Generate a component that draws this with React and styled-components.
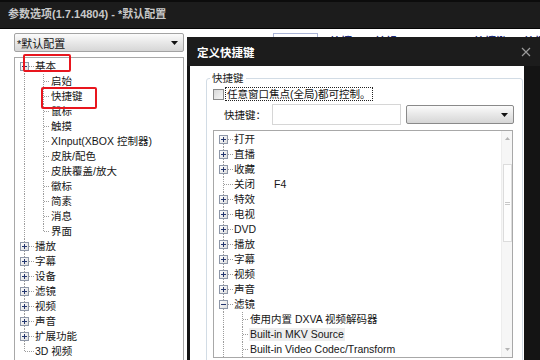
import React from "react";
import styled, { createGlobalStyle } from "styled-components";

const FONT = `"Liberation Sans", "Noto Sans CJK SC", sans-serif`;

const GlobalStyle = createGlobalStyle`
  html, body { margin: 0; padding: 0; background: #fff; }
  body { font-family: ${FONT}; }
  * { box-sizing: border-box; }
`;

const Window = styled.div`
  position: relative;
  width: 540px;
  height: 360px;
  overflow: hidden;
  background: #fff;
  font-family: ${FONT};
  display: flex;
  flex-direction: column;
`;

const TitleBar = styled.div`
  flex: none;
  height: 29px;
  background: #1c1c1c;
  border-top: 2px solid #0c0c0c;
  border-bottom: 1px solid #050505;
  padding-left: 8px;
  color: #c8c8c8;
  font-size: 11px;
  font-weight: bold;
  line-height: 25px;
`;

const Content = styled.div`
  flex: 1;
  display: flex;
  align-items: flex-start;
  padding: 4px 0 0 14px;
`;

const LeftPanel = styled.div`
  width: 170px;
  flex: none;
  display: flex;
  flex-direction: column;
  gap: 5px;
`;

const Combo = styled.div`
  display: flex;
  align-items: center;
  width: ${(p) => p.$w}px;
  height: 19px;
  padding: 0 5px 0 2px;
  border: 1px solid ${(p) => p.$border || "#a3a3a3"};
  border-radius: 2px;
  background: linear-gradient(#fbfbfb, #e8e8e8 50%, #d6d6d6);
  font-size: 11px;
  color: #111;
`;

const ComboText = styled.span`
  flex: 1;
`;

const TreeBox = styled.div`
  display: flex;
  width: ${(p) => p.$w}px;
  height: ${(p) => p.$h}px;
  border: 1px solid #a8a8a8;
  background: #fff;
  overflow: hidden;
`;

const TreeRows = styled.div`
  flex: 1;
  display: flex;
  flex-direction: column;
  padding-top: 1px;
  min-width: 0;
`;

const Row = styled.div`
  display: flex;
  align-items: center;
  flex: none;
  height: 15px;
  white-space: nowrap;
  font-size: 10.5px;
  color: #161616;
`;

const Label = styled.span`
  line-height: 13px;
  padding: 0 1px;
  margin-left: -1px;
  background: ${(p) => (p.$selected ? "#eeeeee" : "transparent")};
`;

const KeyText = styled.span`
  margin-left: 18px;
  line-height: 13px;
`;

const UnderPanel = styled.div`
  display: flex;
  align-items: flex-start;
  padding-left: 89px;
`;

const UnderBox = styled.div`
  width: 45px;
  height: 20px;
  border: 1px solid #aab4d6;
  background: #fff;
`;

const UnderTag = styled.span`
  margin-left: ${(p) => p.$ml}px;
  margin-top: 2px;
  font-size: 11px;
  font-weight: bold;
  color: #1d2b7a;
  line-height: 14px;
  white-space: nowrap;
`;

const Dialog = styled.div`
  position: absolute;
  left: 187px;
  top: 37px;
  right: 0;
  bottom: 0;
  background: #141414;
  display: flex;
  flex-direction: column;
`;

const DialogTitle = styled.div`
  flex: none;
  height: 29px;
  display: flex;
  align-items: center;
  padding: 0 9px 0 10px;
  background: #1c1c1c;
  color: #fff;
  font-size: 11.5px;
  font-weight: bold;
`;

const CloseBtn = styled.span`
  margin-left: auto;
  display: flex;
`;

const DialogBody = styled.div`
  flex: 1;
  margin: 0 16px 0 3px;
  background: #fff;
  padding: 5px 1px 0 16px;
  overflow: hidden;
`;

const Group = styled.fieldset`
  margin: 0;
  padding: 0 8px 0 6px;
  min-width: 0;
  height: 320px;
  border: 1px solid #d2dce5;
  border-radius: 3px;
`;

const Legend = styled.legend`
  margin-left: -3px;
  padding: 0 2px;
  font-size: 10.5px;
  line-height: 14px;
  color: #1a1a1a;
`;

const CheckRow = styled.div`
  display: flex;
  align-items: center;
  height: 14px;
  margin-top: 2px;
`;

const CheckBox = styled.span`
  width: 11px;
  height: 11px;
  border: 1px solid #8a8a8a;
  background: linear-gradient(135deg, #d8d8d8, #f6f6f6);
`;

const FocusLabel = styled.span`
  margin-left: 1px;
  padding: 0 1px;
  border: 1px dotted #222;
  font-size: 10.5px;
  line-height: 12px;
  color: #111;
`;

const KeyRow = styled.div`
  display: flex;
  align-items: center;
  margin-top: 3px;
`;

const KeyLabel = styled.span`
  width: 59px;
  padding-left: 11px;
  font-size: 10.5px;
  color: #111;
`;

const Input = styled.div`
  width: 129px;
  height: 21px;
  border: 1px solid #d6d6d6;
  background: #fff;
`;

const ComboSpacer = styled.div`
  margin-left: 5px;
`;

const TreeWrap = styled.div`
  margin-top: 5px;
`;

const Scrollbar = styled.div`
  flex: none;
  width: 11px;
  display: flex;
  flex-direction: column;
  align-items: center;
  background: #f6f6f6;
  border-left: 1px solid #ededed;
`;

const ScrollArrow = styled.div`
  flex: none;
  height: 15px;
  display: flex;
  align-items: center;
  justify-content: center;
`;

const Thumb = styled.div`
  flex: none;
  margin-top: 18px;
  width: 9px;
  height: 78px;
  border: 1px solid #dcdcdc;
  background: #fdfdfd;
  display: flex;
  align-items: center;
  justify-content: center;
`;

const Grip = styled.span`
  width: 5px;
  height: 3px;
  border-top: 1px solid #c8c8c8;
  border-bottom: 1px solid #c8c8c8;
`;

const Fill = styled.div`
  flex: 1;
`;

const Marker = styled.div`
  position: absolute;
  left: ${(p) => p.$x}px;
  top: ${(p) => p.$y}px;
  width: ${(p) => p.$w}px;
  height: ${(p) => p.$h}px;
  border: 2px solid #e8161e;
  border-radius: 2px;
`;

function DownArrow({ color = "#111" }) {
  return (
    <svg width="7" height="4" viewBox="0 0 7 4">
      <path d="M0 0H7L3.5 4Z" fill={color} />
    </svg>
  );
}

function SmallArrow({ up }) {
  return (
    <svg width="5" height="3" viewBox="0 0 5 3">
      <path d={up ? "M0 3H5L2.5 0Z" : "M0 0H5L2.5 3Z"} fill="#b4b4b4" />
    </svg>
  );
}

function CloseIcon() {
  return (
    <svg width="10" height="10" viewBox="0 0 10 10">
      <path d="M1 1L9 9M9 1L1 9" stroke="#9a9a9a" strokeWidth="1.2" />
    </svg>
  );
}

const DOT = "#9c9c9c";

function Glyph({ depth, expander, expanded, first, last, parentLast }) {
  const w = depth === 0 ? 20 : 36;
  const common = {
    stroke: DOT,
    strokeWidth: 1,
    strokeDasharray: "1 1",
    shapeRendering: "crispEdges",
  };
  return (
    <svg width={w} height="15" viewBox={`0 0 ${w} 15`} style={{ flex: "none" }}>
      <defs>
        <linearGradient id="exp" x1="0" y1="0" x2="1" y2="1">
          <stop offset="0" stopColor="#ffffff" />
          <stop offset="1" stopColor="#dcdcdc" />
        </linearGradient>
      </defs>
      {depth === 0 ? (
        <>
          <line x1="9.5" y1={first ? 7.5 : 0} x2="9.5" y2={last ? 7.5 : 15} {...common} />
          <line x1="10" y1="7.5" x2="19" y2="7.5" {...common} />
        </>
      ) : (
        <>
          {!parentLast && <line x1="9.5" y1="0" x2="9.5" y2="15" {...common} />}
          <line x1="28.5" y1="0" x2="28.5" y2={last ? 7.5 : 15} {...common} />
          <line x1="29" y1="7.5" x2="35" y2="7.5" {...common} />
        </>
      )}
      {expander && (
        <>
          <rect x="5.5" y="3.5" width="8" height="8" fill="url(#exp)" stroke="#8e97a8" shapeRendering="crispEdges" />
          <line x1="7" y1="7.5" x2="12" y2="7.5" stroke="#24366e" shapeRendering="crispEdges" />
          {!expanded && <line x1="9.5" y1="5" x2="9.5" y2="10" stroke="#24366e" shapeRendering="crispEdges" />}
        </>
      )}
    </svg>
  );
}

function flatten(nodes) {
  const rows = [];
  nodes.forEach((n, i) => {
    const kids = n.children || [];
    rows.push({
      depth: 0,
      label: n.label,
      keyText: n.key,
      expander: !!(n.children || n.collapsed),
      expanded: !!n.children,
      first: i === 0,
      last: i === nodes.length - 1,
    });
    kids.forEach((c, j) => {
      const child = typeof c === "string" ? { label: c } : c;
      rows.push({
        depth: 1,
        label: child.label,
        selected: child.selected,
        last: j === kids.length - 1,
        parentLast: i === nodes.length - 1,
      });
    });
  });
  return rows;
}

function Tree({ nodes }) {
  return flatten(nodes).map((r, i) => (
    <Row key={i}>
      <Glyph {...r} />
      <Label $selected={r.selected}>{r.label}</Label>
      {r.keyText && <KeyText>{r.keyText}</KeyText>}
    </Row>
  ));
}

const leftNodes = [
  {
    label: "基本",
    children: [
      "启始",
      "快捷键",
      "鼠标",
      "触摸",
      "XInput(XBOX 控制器)",
      "皮肤/配色",
      "皮肤覆盖/放大",
      "徽标",
      "简素",
      "消息",
      "界面",
    ],
  },
  { label: "播放", collapsed: true },
  { label: "字幕", collapsed: true },
  { label: "设备", collapsed: true },
  { label: "滤镜", collapsed: true },
  { label: "视频", collapsed: true },
  { label: "声音", collapsed: true },
  { label: "扩展功能", collapsed: true },
  { label: "3D 视频" },
];

const rightNodes = [
  { label: "打开", collapsed: true },
  { label: "直播", collapsed: true },
  { label: "收藏", collapsed: true },
  { label: "关闭", key: "F4" },
  { label: "特效", collapsed: true },
  { label: "电视", collapsed: true },
  { label: "DVD", collapsed: true },
  { label: "播放", collapsed: true },
  { label: "字幕", collapsed: true },
  { label: "视频", collapsed: true },
  { label: "声音", collapsed: true },
  {
    label: "滤镜",
    children: [
      "使用内置 DXVA 视频解码器",
      { label: "Built-in MKV Source", selected: true },
      "Built-in Video Codec/Transform",
      "Built-in Audio Codec/Transform",
      "Built-in Subtitle Renderer",
    ],
  },
  { label: "其他", collapsed: true },
];

export default function App() {
  return (
    <>
      <GlobalStyle />
      <Window>
        <TitleBar>参数选项(1.7.14804) - *默认配置</TitleBar>
        <Content>
          <LeftPanel>
            <Combo $w={170}>
              <ComboText>*默认配置</ComboText>
              <DownArrow />
            </Combo>
            <TreeBox $w={170} $h={320}>
              <TreeRows>
                <Tree nodes={leftNodes} />
              </TreeRows>
            </TreeBox>
          </LeftPanel>
          <UnderPanel>
            <UnderBox />
            <UnderTag $ml={12}>快捷</UnderTag>
            <UnderTag $ml={23}>编辑</UnderTag>
            <UnderTag $ml={77}>快捷键</UnderTag>
            <UnderTag $ml={17}>快捷键</UnderTag>
          </UnderPanel>
        </Content>

        <Dialog>
          <DialogTitle>
            定义快捷键
            <CloseBtn>
              <CloseIcon />
            </CloseBtn>
          </DialogTitle>
          <DialogBody>
            <Group>
              <Legend>快捷键</Legend>
              <CheckRow>
                <CheckBox />
                <FocusLabel>任意窗口焦点(全局)都可控制。</FocusLabel>
              </CheckRow>
              <KeyRow>
                <KeyLabel>快捷键：</KeyLabel>
                <Input />
                <ComboSpacer>
                  <Combo $w={108} $border="#8a8a8a">
                    <ComboText />
                    <DownArrow />
                  </Combo>
                </ComboSpacer>
              </KeyRow>
              <TreeWrap>
                <TreeBox $w={300} $h={228}>
                  <TreeRows>
                    <Tree nodes={rightNodes} />
                  </TreeRows>
                  <Scrollbar>
                    <ScrollArrow>
                      <SmallArrow up />
                    </ScrollArrow>
                    <Thumb>
                      <Grip />
                    </Thumb>
                    <Fill />
                    <ScrollArrow>
                      <SmallArrow />
                    </ScrollArrow>
                  </Scrollbar>
                </TreeBox>
              </TreeWrap>
            </Group>
          </DialogBody>
        </Dialog>

        <Marker $x={23} $y={54} $w={48} $h={18} />
        <Marker $x={41} $y={87} $w={56} $h={22} />
      </Window>
    </>
  );
}
